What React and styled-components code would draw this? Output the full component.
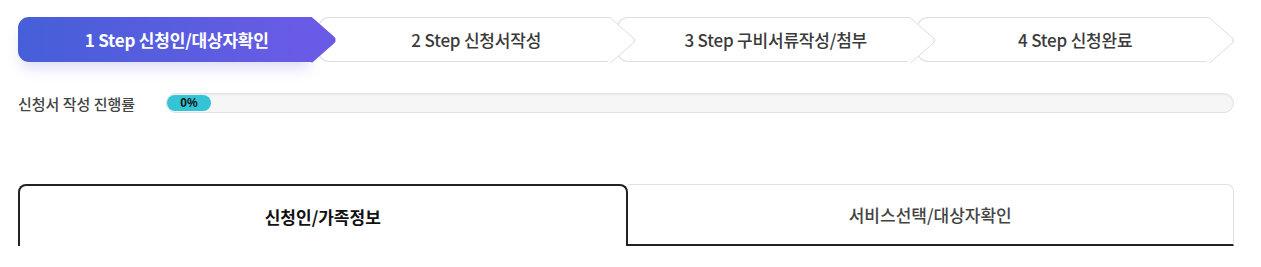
import React from 'react'
import styled, { createGlobalStyle, css } from 'styled-components'

const GlobalStyle = createGlobalStyle`
	* { box-sizing: border-box; }
	body {
		margin: 0;
		background: #fff;
		font-family: 'Noto Sans CJK KR', 'Noto Sans', sans-serif;
	}
`

const Page = styled.div`
	padding: 17px 27px 0 18px;
`

const Steps = styled.ol`
	display: flex;
	list-style: none;
	margin: 0;
	padding: 0;
`

const Step = styled.li`
	position: relative;
	flex: 1;
	height: 45px;
	margin-left: -18px;
	display: flex;
	align-items: center;
	justify-content: center;
	font-size: 17px;
	font-weight: 500;
	color: #3a3a3a;
	letter-spacing: -0.2px;
	z-index: ${(p) => p.$z};
	&:first-child {
		margin-left: 0;
	}
	&::before {
		content: '';
		position: absolute;
		left: 0;
		top: 0;
		bottom: 0;
		right: 24px;
		border: 1px solid #dedede;
		border-right: none;
		border-radius: 11px 0 0 11px;
		background: #fff;
	}
	&::after {
		content: '';
		position: absolute;
		top: calc(50% - 16px);
		right: 8px;
		width: 32px;
		height: 32px;
		border-top: 1px solid #dedede;
		border-right: 1px solid #dedede;
		border-radius: 0 5px 0 0;
		background: #fff;
		transform: scaleX(1.15) rotate(45deg);
	}
	${(p) =>
		p.$active &&
		css`
			color: #fff;
			font-weight: 700;
			&::before {
				border: none;
				background: linear-gradient(90deg, #465fd8 0%, #6a5be6 100%);
				box-shadow: 0 9px 14px -3px rgba(95, 95, 225, 0.22);
			}
			&::after {
				border: none;
				background: #6a5be6;
			}
		`}
`

const StepLabel = styled.span`
	position: relative;
	z-index: 1;
`

const ProgressRow = styled.div`
	display: flex;
	align-items: center;
	margin-top: 31px;
	height: 20px;
`

const ProgressLabel = styled.span`
	width: 148px;
	font-size: 15px;
	font-weight: 500;
	color: #444;
`

const Track = styled.div`
	flex: 1;
	height: 20px;
	padding: 1px 0;
	border: 1px solid #e3e3e3;
	border-radius: 10px;
	background: #f6f6f6;
	box-shadow: inset 0 1px 2px rgba(0, 0, 0, 0.05);
`

const Fill = styled.div`
	height: 100%;
	min-width: 44px;
	border-radius: 9px;
	background: #33c4d6;
	display: flex;
	align-items: center;
	justify-content: center;
	font-family: 'Liberation Sans', Arial, sans-serif;
	font-size: 12px;
	font-weight: 700;
	color: #111;
`

const Tabs = styled.div`
	display: flex;
	margin-top: 71px;
`

const Tab = styled.div`
	flex: 1;
	height: 62px;
	display: flex;
	align-items: center;
	justify-content: center;
	font-size: 17px;
	${(p) =>
		p.$active
			? css`
					border: 2px solid #222;
					border-bottom: none;
					border-radius: 8px 8px 0 0;
					font-weight: 700;
					color: #111;
			  `
			: css`
					border-top: 1px solid #e2e2e2;
					border-right: 1px solid #e2e2e2;
					border-bottom: 2px solid #222;
					border-radius: 0 7px 0 0;
					font-weight: 500;
					color: #444;
			  `}
`

const steps = [
	'1 Step 신청인/대상자확인',
	'2 Step 신청서작성',
	'3 Step 구비서류작성/첨부',
	'4 Step 신청완료',
]

export default function App() {
	const progress = 0

	return (
		<Page>
			<GlobalStyle />
			<Steps>
				{steps.map((label, index) => (
					<Step key={label} $active={index === 0} $z={steps.length - index}>
						<StepLabel>{label}</StepLabel>
					</Step>
				))}
			</Steps>
			<ProgressRow>
				<ProgressLabel>신청서 작성 진행률</ProgressLabel>
				<Track>
					<Fill style={{ width: `${progress}%` }}>{progress}%</Fill>
				</Track>
			</ProgressRow>
			<Tabs>
				<Tab $active>신청인/가족정보</Tab>
				<Tab>서비스선택/대상자확인</Tab>
			</Tabs>
		</Page>
	)
}
